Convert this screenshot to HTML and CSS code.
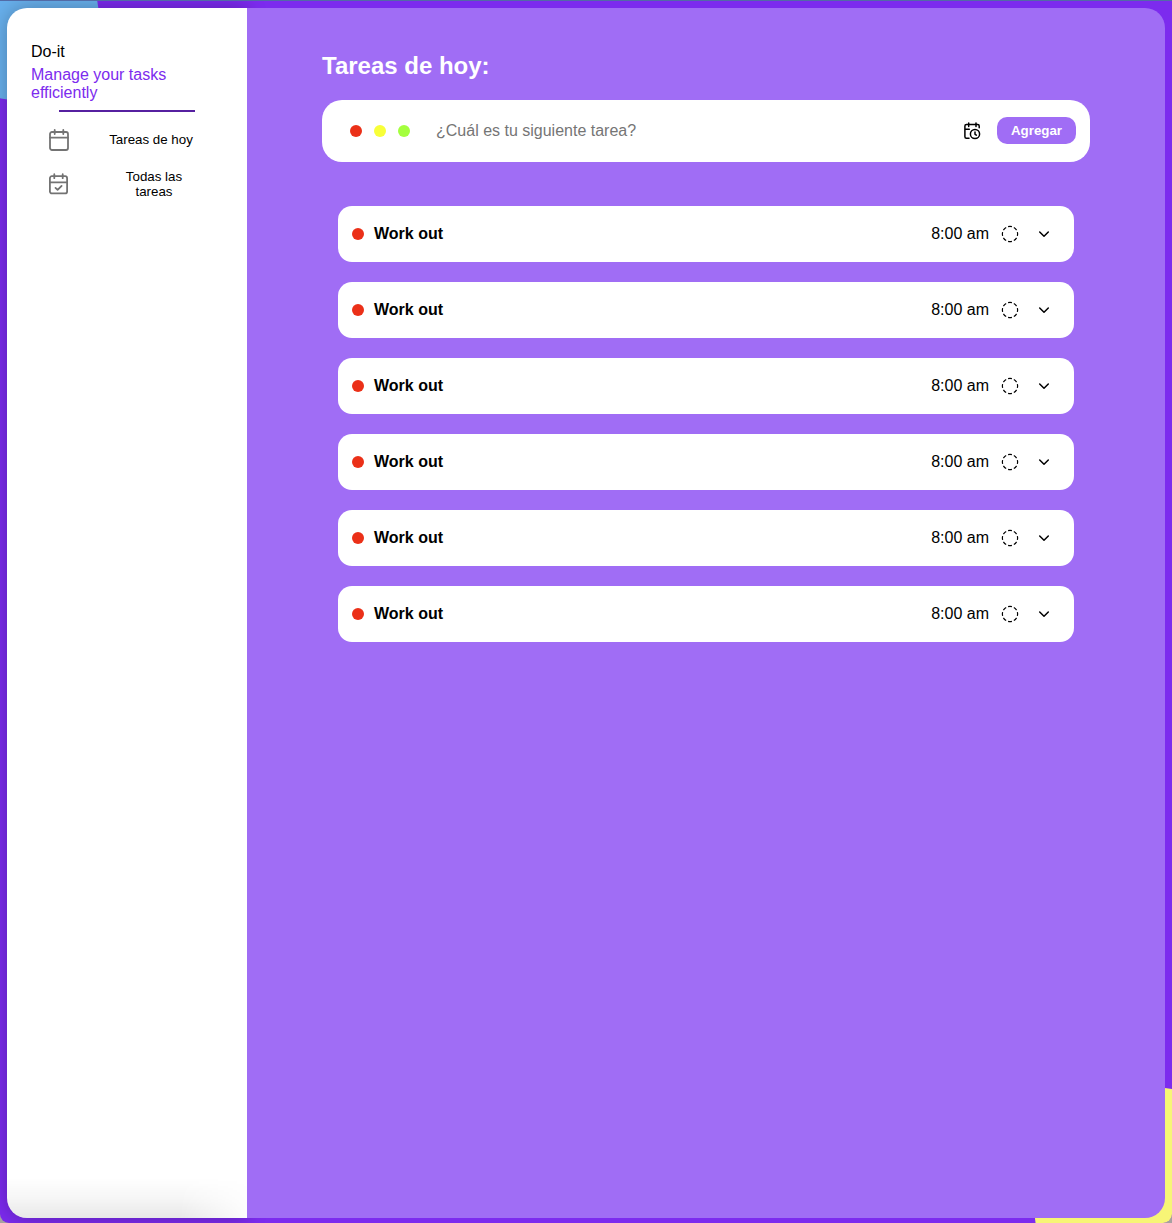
FILE: index.html
```
<!DOCTYPE html>
<html lang="es">
<head>
<meta charset="utf-8">
<title>Do-it</title>
<link rel="stylesheet" href="styles.css">
</head>
<body>
<svg class="sprite" aria-hidden="true">
  <symbol id="calendar" viewBox="0 0 24 24"><path d="M7.700 2v4M16.300 2v4M3 9.700h18"/><rect x="3" y="4" width="18" height="18" rx="2"/></symbol>
  <symbol id="calendar-check" viewBox="0 0 24 24"><path d="M7.300 2.200v4M15.700 2.200v4M3 10.300h17M8.500 15.900l2.100 2 4-4"/><rect x="2.900" y="4.200" width="17.200" height="17.200" rx="2"/></symbol>
  <symbol id="calendar-clock" viewBox="0 0 20 20"><path d="M17.200 6.700V5a1.500 1.500 0 0 0-1.500-1.500H4.400A1.500 1.500 0 0 0 2.900 5v10.700a1.500 1.500 0 0 0 1.500 1.500H7M6.700 2v3.600M14 2v3.600M2.900 8.300h4.400M13 11v2.300l1.400.9"/><circle cx="13" cy="13" r="4.600"/></symbol>
  <symbol id="circle-dashed" viewBox="0 0 20 20"><circle cx="10" cy="10" r="7.600" pathLength="80" stroke-dasharray="6.500 3.500" stroke-dashoffset="3.250"/></symbol>
  <symbol id="chevron" viewBox="0 0 20 20"><path d="m5.700 8 4.300 4.200L14.300 8"/></symbol>
</svg>
<div class="app">
  <div class="bubble bubble-blue"></div>
  <div class="bubble bubble-yellow"></div>
  <div class="panel">
    <aside class="sidebar">
      <p class="brand">Do-it</p>
      <p class="tagline">Manage your tasks efficiently</p>
      <hr class="divider">
      <nav class="nav">
        <a class="nav-item"><svg class="icon nav-icon"><use href="#calendar"/></svg><span class="nav-label">Tareas de hoy</span></a>
        <a class="nav-item nav-item-all"><svg class="icon nav-icon"><use href="#calendar-check"/></svg><span class="nav-label">Todas las tareas</span></a>
      </nav>
    </aside>
    <main class="main">
      <h1 class="title">Tareas de hoy:</h1>
      <form class="composer">
        <span class="dot red"></span><span class="dot yellow"></span><span class="dot green"></span>
        <input class="task-input" type="text" placeholder="¿Cuál es tu siguiente tarea?">
        <svg class="icon clock-icon"><use href="#calendar-clock"/></svg>
        <button class="add" type="button">Agregar</button>
      </form>
      <ul class="tasks">
        <li class="task"><span class="dot red"></span><b class="name">Work out</b><span class="time">8:00 am</span><svg class="icon status"><use href="#circle-dashed"/></svg><svg class="icon chevron"><use href="#chevron"/></svg></li>
        <li class="task"><span class="dot red"></span><b class="name">Work out</b><span class="time">8:00 am</span><svg class="icon status"><use href="#circle-dashed"/></svg><svg class="icon chevron"><use href="#chevron"/></svg></li>
        <li class="task"><span class="dot red"></span><b class="name">Work out</b><span class="time">8:00 am</span><svg class="icon status"><use href="#circle-dashed"/></svg><svg class="icon chevron"><use href="#chevron"/></svg></li>
        <li class="task"><span class="dot red"></span><b class="name">Work out</b><span class="time">8:00 am</span><svg class="icon status"><use href="#circle-dashed"/></svg><svg class="icon chevron"><use href="#chevron"/></svg></li>
        <li class="task"><span class="dot red"></span><b class="name">Work out</b><span class="time">8:00 am</span><svg class="icon status"><use href="#circle-dashed"/></svg><svg class="icon chevron"><use href="#chevron"/></svg></li>
        <li class="task"><span class="dot red"></span><b class="name">Work out</b><span class="time">8:00 am</span><svg class="icon status"><use href="#circle-dashed"/></svg><svg class="icon chevron"><use href="#chevron"/></svg></li>
      </ul>
    </main>
  </div>
</div>
</body>
</html>
```
FILE: styles.css
```
* { box-sizing: border-box; margin: 0; padding: 0; }
body {
  background: #a6a1a0;
  font: 16px/18px "Liberation Sans", Arial, sans-serif;
  color: #000;
}
.sprite { display: none; }
.app {
  position: relative;
  height: 100vh;
  padding: 7px 7px 5px;
  border-top: 1px solid #526ba6;
  border-radius: 0 0 9px 9px;
  overflow: hidden;
  background: #7c2bee;
}
.bubble { position: absolute; border-radius: 50%; }
.bubble-blue { left: -65px; top: -65px; width: 164px; height: 164px; background: #68b0ed; }
.bubble-yellow { left: 1034px; top: 1086px; width: 234px; height: 234px; background: #f7f576; }
.panel { position: relative; display: flex; height: 100%; }
.sidebar {
  position: relative;
  width: 240px;
  padding: 35px 52px 0 24px;
  border-radius: 20px 0 0 20px;
  background: #fff;
  box-shadow: 0 0 20px rgba(0, 0, 0, .28);
}
.sidebar::after {
  content: "";
  position: absolute;
  inset: auto 0 0;
  height: 40px;
  border-radius: 0 0 0 20px;
  background: linear-gradient(to top, rgba(0, 0, 0, .09), rgba(0, 0, 0, .035) 50%, transparent);
  mask-image: linear-gradient(to right, #000 72%, rgba(0, 0, 0, .12));
}
.brand { margin-bottom: 5px; }
.tagline { width: 160px; color: #7c2bee; }
.divider { width: 136px; height: 2px; margin: 8px 0 0 28px; border: 0; background: #5620a0; }
.nav { display: flex; flex-direction: column; gap: 16px; padding: 16px 0 0 16px; }
.nav-item { display: flex; align-items: center; gap: 38px; height: 24px; }
.nav-item-all { height: 32px; }
.nav-label { width: 84px; flex: none; padding-bottom: 2px; text-align: center; font-size: 13.333px; line-height: 15px; white-space: nowrap; }
.nav-item-all .nav-label { width: 60px; margin-left: 15px; padding: 0; white-space: normal; }
.icon { flex: none; fill: none; stroke: currentColor; stroke-width: 1.5; stroke-linecap: round; stroke-linejoin: round; }
.nav-icon { width: 24px; height: 24px; color: #737373; stroke-width: 1.8; }
.main {
  position: relative;
  flex: 1;
  padding: 44px 75px 0;
  border-radius: 0 20px 20px 0;
  background: #a06df5;
}
.title { color: #fff; font-size: 24px; line-height: 28px; }
.composer {
  display: flex;
  align-items: center;
  gap: 12px;
  height: 62px;
  margin-top: 20px;
  padding: 0 14px 0 28px;
  border-radius: 20px;
  background: #fff;
}
.dot { flex: none; width: 12px; height: 12px; border-radius: 50%; }
.red { background: #eb3018; }
.yellow { background: #f8ff38; }
.green { background: #a4ff3e; }
.task-input { flex: 1; min-width: 0; margin-left: 14px; border: 0; outline: 0; font: inherit; background: none; }
.task-input::placeholder { color: #757575; }
.clock-icon { width: 20px; height: 20px; margin-right: 3px; }
.add {
  width: 79px;
  height: 27px;
  margin-bottom: 2px;
  border: 0;
  border-radius: 10px;
  background: #a06df5;
  color: #fff;
  font: bold 13.333px/15px "Liberation Sans", Arial, sans-serif;
}
.tasks { display: flex; flex-direction: column; gap: 20px; padding: 44px 16px 0; list-style: none; }
.task {
  display: flex;
  align-items: center;
  height: 56px;
  padding: 0 20px 0 14px;
  border-radius: 14px;
  background: #fff;
}
.name { flex: 1; margin-left: 10px; }
.status { width: 20px; height: 20px; margin: 0 14px 0 11px; stroke-width: 1.2; stroke-linecap: butt; }
.chevron { width: 20px; height: 20px; }
```
